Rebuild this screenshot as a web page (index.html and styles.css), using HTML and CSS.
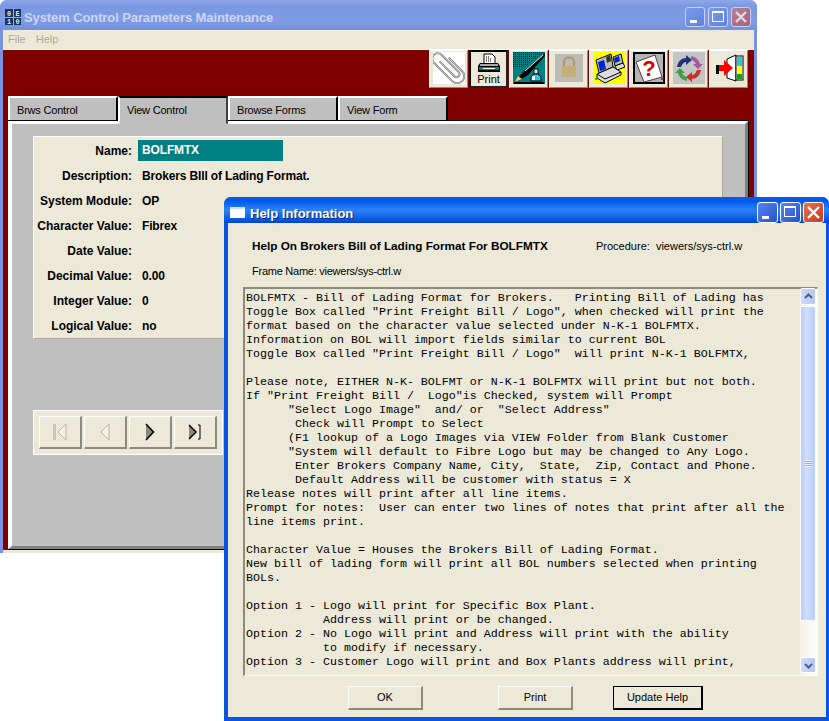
FILE: index.html
```html
<!DOCTYPE html>
<html lang="en">
<head>
    <meta charset="UTF-8">
    <title>System Control Parameters Maintenance</title>
    <link rel="stylesheet" href="styles.css">
</head>
<body>

<div class="window main-window">
    <div class="titlebar inactive">
        <svg class="app-icon" width="16" height="16" viewBox="0 0 16 16">
            <rect width="16" height="16" fill="#16325e"/>
            <rect x="8" width="1" height="16" fill="#9fb2d8"/>
            <rect y="8" width="16" height="1" fill="#9fb2d8"/>
            <g class="app-icon-text">
                <text x="4" y="6.5">0</text>
                <text x="12.5" y="6.5">E</text>
                <text x="4" y="15">1</text>
                <text x="12.5" y="15">0</text>
            </g>
        </svg>
        <span class="title-text">System Control Parameters Maintenance</span>
        <div class="caption-btns">
            <span class="cap cap-min"></span>
            <span class="cap cap-max"></span>
            <span class="cap cap-close">
                <svg width="20" height="20" viewBox="0 0 20 20"><path d="M5 5l10 10M15 5L5 15" stroke="#e8d8e0" stroke-width="2.4"/></svg>
            </span>
        </div>
    </div>
    <div class="menubar"><span>File</span><span>Help</span></div>
    <div class="work">
        <div class="toolbar">
            <div class="tool">
                <svg width="32" height="32" viewBox="0 0 32 32">
                    <rect width="32" height="32" fill="#fff"/>
                    <g transform="translate(15 15) rotate(-45)">
                        <path d="M-2-10V11a3 3 0 0 0 6 0V-13a5.500 5.500 0 0 0-11 0V13a7 7 0 0 0 14 0V-6" fill="none" stroke="#7c7c7c" stroke-width="2"/>
                        <path d="M-2-10V11a3 3 0 0 0 6 0V-13a5.500 5.500 0 0 0-11 0V13a7 7 0 0 0 14 0V-6" fill="none" stroke="#d4d4d4" stroke-width="0.8"/>
                    </g>
                </svg>
            </div>
            <div class="tool pressed">
                <svg width="24" height="21" viewBox="0 0 24 21">
                    <path d="M7 1h8l3 3v7H7z" fill="#fff" stroke="#000"/>
                    <path d="M9 4h1M11 4h1M9 6h1M11 6h1M13 6h1M9 8h1M11 8h1M13 8h1" stroke="#000"/>
                    <path d="M3 10h18l2 3v6H1v-6z" fill="#000"/>
                    <rect x="3" y="11" width="18" height="2" fill="#a8a8a8"/>
                    <rect x="2" y="14" width="20" height="3" fill="#008080"/>
                    <rect x="6" y="15" width="12" height="1" fill="#fff"/>
                </svg>
                <span>Print</span>
            </div>
            <div class="tool">
                <svg width="32" height="32" viewBox="0 0 32 32">
                    <defs><pattern id="dots" width="2" height="2" patternUnits="userSpaceOnUse"><rect width="1" height="1" fill="#062020"/></pattern></defs>
                    <rect width="32" height="32" fill="#008080"/>
                    <path d="M0 0h32L12 15H0z" fill="url(#dots)"/>
                    <path d="M32 1L11 19l-7 8-2 3 5-2 8-5L32 4z" fill="#000"/>
                    <path d="M30 3L12 19" stroke="#fff"/>
                    <path d="M2 30l3-6 4 3z" fill="#fc6"/>
                    <rect x="21" y="17" width="4" height="5" fill="#e8e8e8" stroke="#000"/>
                    <path d="M18 29v-4l3-3h4l3 3v4z" fill="#2ce" stroke="#000"/>
                    <rect x="19" y="24" width="3" height="4" fill="#fff"/>
                    <rect x="1" y="30" width="30" height="2" fill="#000"/>
                </svg>
            </div>
            <div class="tool">
                <svg width="32" height="32" viewBox="0 0 32 32">
                    <rect x="2" y="2" width="28" height="28" fill="#bcbbb6"/>
                    <path d="M11 14v-4c0-6 10-6 10 0v4" fill="none" stroke="#a99a70" stroke-width="2"/>
                    <rect x="9" y="14" width="14" height="11" fill="#c6ae78"/>
                </svg>
            </div>
            <div class="tool">
                <svg width="32" height="32" viewBox="0 0 32 32">
                    <rect width="32" height="32" fill="#ff0"/>
                    <path d="M20 5l8-3 2 9-8 3z" fill="#bbb" stroke="#000"/>
                    <path d="M21 6l5-2 1 5-5 2z" fill="#02c"/>
                    <path d="M22 14l8-3 2 4-8 3z" fill="#ddd" stroke="#000"/>
                    <path d="M3 8l15-6 2 13-14 6z" fill="#bbb" stroke="#000"/>
                    <path d="M5 10l6-2 2 9-6 2z" fill="#02c"/>
                    <path d="M13 5l4-2 1 6-4 2z" fill="#333"/>
                    <path d="M4 22l16-7 8 5v3l-16 8-8-5z" fill="#ddd" stroke="#000"/>
                    <path d="M4 22l8 5 16-7" fill="none" stroke="#000"/>
                    <rect x="2" y="26" width="2" height="2" fill="#0c0"/>
                </svg>
            </div>
            <div class="tool">
                <svg width="32" height="32" viewBox="0 0 32 32">
                    <rect x="1" y="1" width="30" height="30" fill="#b4b4b4" stroke="#000" stroke-width="2"/>
                    <path d="M3 10L22 3l7 22-18 5z" fill="#fff" stroke="#444"/>
                    <text class="help-mark" x="16" y="24">?</text>
                    <rect x="28" y="26" width="2" height="2" fill="#c0c"/>
                </svg>
            </div>
            <div class="tool">
                <svg width="32" height="32" viewBox="0 0 32 32">
                    <rect width="32" height="32" fill="#c4c4c4"/>
                    <path d="M4 15c1-6 5-9 9-9V3l6 5-6 5v-3c-2 0-4 2-5 5z" fill="#233078"/>
                    <path d="M18 4c5 1 8 4 9 8h3l-5 5-5-5h3c-1-2-3-4-5-4z" fill="#a35aa0"/>
                    <path d="M28 18c-1 6-5 9-9 9v3l-6-5 6-5v3c2 0 4-2 5-5z" fill="#c4342a"/>
                    <path d="M14 29c-5-1-8-4-9-8H2l5-5 5 5H9c1 2 3 4 5 4z" fill="#48984c"/>
                </svg>
            </div>
            <div class="tool">
                <svg width="32" height="32" viewBox="0 0 32 32">
                    <path d="M14 7l9-4v26l-9-3z" fill="#fff" stroke="#000"/>
                    <rect x="23" y="4" width="7" height="24" fill="#fff" stroke="#000"/>
                    <rect x="24" y="5" width="5" height="9" fill="#2cd"/>
                    <rect x="24" y="14" width="5" height="8" fill="#ff0"/>
                    <rect x="24" y="22" width="5" height="5" fill="#0a0"/>
                    <path d="M5 13h6V8l9 8-9 8v-5H5z" fill="#f00"/>
                    <path d="M3 13h3v9H3z" fill="#000"/>
                </svg>
            </div>
        </div>
        <div class="tabs">
            <div class="tab">Brws Control</div>
            <div class="tab active">View Control</div>
            <div class="tab">Browse Forms</div>
            <div class="tab">View Form</div>
        </div>
        <div class="tab-page">
            <div class="form-panel">
                <div class="row"><label>Name:</label><span class="name-value">BOLFMTX</span></div>
                <div class="row"><label>Description:</label><span>Brokers BIll of Lading Format.</span></div>
                <div class="row"><label>System Module:</label><span>OP</span></div>
                <div class="row"><label>Character Value:</label><span>Fibrex</span></div>
                <div class="row"><label>Date Value:</label><span></span></div>
                <div class="row"><label>Decimal Value:</label><span>0.00</span></div>
                <div class="row"><label>Integer Value:</label><span>0</span></div>
                <div class="row"><label>Logical Value:</label><span>no</span></div>
            </div>
            <div class="nav-panel">
                <div class="nav-btn"><svg width="14" height="18" viewBox="0 0 14 18"><path d="M1.500 1v16" stroke="#c8c6b8" stroke-width="3"/><path d="M13 1L5 9l8 8z" fill="#f6f4ea" stroke="#b4b2a4"/></svg></div>
                <div class="nav-btn"><svg width="10" height="18" viewBox="0 0 10 18"><path d="M9 1L1 9l8 8z" fill="#f6f4ea" stroke="#b4b2a4"/></svg></div>
                <div class="nav-btn"><svg width="10" height="18" viewBox="0 0 10 18"><path d="M1 1l8 8-8 8z" fill="#8c8a7c"/><path d="M1 1l7.500 8L1 17" fill="none" stroke="#000" stroke-width="1.500"/></svg></div>
                <div class="nav-btn"><svg width="14" height="16" viewBox="0 0 14 16"><path d="M1 1l7 7-7 7z" fill="#8c8a7c"/><path d="M1 1l7 7-7 7" fill="none" stroke="#000" stroke-width="1.500"/><path d="M10 1h2v14h-2" fill="none" stroke="#000"/></svg></div>
            </div>
        </div>
    </div>
    <div class="window-foot"></div>
</div>

<div class="window help-window">
    <div class="titlebar">
        <span class="help-icon"></span>
        <span class="title-text">Help Information</span>
        <div class="caption-btns">
            <span class="cap cap-min"></span>
            <span class="cap cap-max"></span>
            <span class="cap cap-close">
                <svg width="21" height="21" viewBox="0 0 21 21"><path d="M5 5l11 11M16 5L5 16" stroke="#fff" stroke-width="2.400"/></svg>
            </span>
        </div>
    </div>
    <div class="help-body">
        <div class="help-head">
            <b>Help On Brokers Bill of Lading Format For BOLFMTX</b>
            <span>Procedure:&nbsp; viewers/sys-ctrl.w</span>
        </div>
        <div class="frame-name">Frame Name: viewers/sys-ctrl.w</div>
        <div class="editor">
<pre class="help-text">BOLFMTX - Bill of Lading Format for Brokers.   Printing Bill of Lading has
Toggle Box called "Print Freight Bill / Logo", when checked will print the
format based on the character value selected under N-K-1 BOLFMTX.
Information on BOL will import fields similar to current BOL
Toggle Box called "Print Freight Bill / Logo"  will print N-K-1 BOLFMTX,

Please note, EITHER N-K- BOLFMT or N-K-1 BOLFMTX will print but not both.
If "Print Freight Bill /  Logo"is Checked, system will Prompt
      "Select Logo Image"  and/ or  "Select Address"
       Check will Prompt to Select
      (F1 lookup of a Logo Images via VIEW Folder from Blank Customer
      "System will default to Fibre Logo but may be changed to Any Logo.
       Enter Brokers Company Name, City,  State,  Zip, Contact and Phone.
       Default Address will be customer with status = X
Release notes will print after all line items.
Prompt for notes:  User can enter two lines of notes that print after all the
line items print.

Character Value = Houses the Brokers Bill of Lading Format.
New bill of lading form will print all BOL numbers selected when printing
BOLs.

Option 1 - Logo will print for Specific Box Plant.
           Address will print or be changed.
Option 2 - No Logo will print and Address will print with the ability
           to modify if necessary.
Option 3 - Customer Logo will print and Box Plants address will print,</pre>
            <div class="scrollbar">
                <div class="sb-btn sb-up"><svg width="9" height="7" viewBox="0 0 9 7"><path d="M1 5l3.500-3.500L8 5" fill="none" stroke="#4d6185" stroke-width="2"/></svg></div>
                <div class="sb-thumb"><span class="grip"></span></div>
                <div class="sb-track"></div>
                <div class="sb-btn sb-down"><svg width="9" height="7" viewBox="0 0 9 7"><path d="M1 2l3.500 3.500L8 2" fill="none" stroke="#4d6185" stroke-width="2"/></svg></div>
            </div>
        </div>
        <div class="help-buttons">
            <div class="btn btn-ok">OK</div>
            <div class="btn btn-print">Print</div>
            <div class="btn default">Update Help</div>
        </div>
    </div>
</div>

</body>
</html>
```

FILE: styles.css
```css
html, body {
    margin: 0;
    height: 721px;
    overflow: hidden;
    background: #fff;
}
body {
    position: relative;
    font-family: "Liberation Sans", Arial, sans-serif;
    font-size: 12px;
    color: #000;
}
.window {
    position: absolute;
    box-sizing: border-box;
    display: flex;
    flex-direction: column;
}

/* main window */
.main-window {
    left: 0;
    top: 0;
    width: 757px;
    height: 553px;
    background: #7b92e0;
    border-radius: 7px 7px 0 0;
    padding: 0 3px;
    overflow: hidden;
}
.titlebar {
    box-sizing: border-box;
    flex: none;
    display: flex;
    align-items: center;
    color: #fff;
}
.titlebar.inactive {
    height: 30px;
    margin: 0 -3px;
    padding: 7px 6px 3px 5px;
    background: linear-gradient(#8fa8e8, #7b98e2 20%, #7f9be4 70%, #7590dc);
    color: #ccd6f6;
}
.app-icon {
    margin-right: 3px;
    flex: none;
}
.app-icon-text text {
    font-family: "Liberation Mono", monospace;
    font-size: 7px;
    font-weight: bold;
    fill: #dfe8f8;
    text-anchor: middle;
}
.title-text {
    font-size: 13px;
    font-weight: bold;
    letter-spacing: -0.1px;
}
.caption-btns {
    margin-left: auto;
    display: flex;
    gap: 3px;
}
.cap {
    box-sizing: border-box;
    width: 20px;
    height: 20px;
    border: 1px solid #fff;
    border-radius: 3px;
    background: linear-gradient(135deg, #5a86ee, #2350d0);
    position: relative;
    display: block;
}
.cap svg {
    position: absolute;
    left: -1px;
    top: -1px;
}
.cap-min::after {
    content: "";
    position: absolute;
    left: 4px;
    bottom: 3px;
    width: 7px;
    height: 3px;
    background: #fff;
}
.cap-max::after {
    content: "";
    position: absolute;
    left: 3px;
    top: 3px;
    width: 10px;
    height: 8px;
    border: 1px solid #fff;
    border-top-width: 2px;
}
.cap-close {
    background: linear-gradient(135deg, #e8704a, #c83a1c);
}
.inactive .cap {
    background: linear-gradient(135deg, #7b9cec, #5f80dc);
    border-color: #c4d2f6;
}
.inactive .cap-close {
    background: linear-gradient(135deg, #b88094, #a0647c);
}
.menubar {
    box-sizing: border-box;
    height: 20px;
    flex: none;
    display: flex;
    align-items: center;
    gap: 10px;
    padding: 0 0 1px 5px;
    background: #ece9d8;
    color: #aca899;
    font-size: 11px;
    border-bottom: 1px solid #fff;
}
.work {
    flex: 1;
    background: #800000;
    display: flex;
    flex-direction: column;
    min-height: 0;
}
.window-foot {
    flex: none;
    height: 3px;
    background: #ece9d8;
}
.toolbar {
    display: flex;
    justify-content: flex-end;
    gap: 1px;
    padding-right: 6px;
    height: 37px;
    flex: none;
}
.tool {
    box-sizing: border-box;
    width: 39px;
    height: 38px;
    padding-top: 1px;
    background: #ece9d8;
    border: 1px solid;
    border-color: #fff #8c8a7c #8c8a7c #fff;
    display: flex;
    flex-direction: column;
    align-items: center;
    font-size: 11px;
    line-height: 11px;
}
.tool.pressed {
    padding-top: 1px;
    border: 2px solid #000;
    border-color: #000 #222 #222 #000;
}
.tabs {
    display: flex;
    align-items: flex-end;
    padding-left: 5px;
    margin-top: 8px;
    height: 26px;
    flex: none;
}
.tab {
    box-sizing: border-box;
    width: 110px;
    height: 25px;
    background: #bfbfbf;
    border-style: solid;
    border-color: #fff #000 #404040 #fff;
    border-width: 2px 2px 1px 2px;
    padding: 2px 0 0 7px;
    line-height: 20px;
    font-size: 11px;
    letter-spacing: -0.2px;
}
.tab.active {
    height: 28px;
    border-color: #000 #404040 #bfbfbf #fff;
    position: relative;
    z-index: 1;
    margin-bottom: -3px;
    padding-top: 2px;
}
.tab-page {
    flex: 1;
    box-sizing: border-box;
    margin: 0 6px 1px 5px;
    background: #bfbfbf;
    border-style: solid;
    border-width: 3px 3px 3px 4px;
    border-color: #fff #808080 #808080 #fff;
    box-shadow: 0 -1px 0 #000, 0 1px 0 #000, 1px 0 0 #000;
    padding: 12px 0 0 21px;
}
.form-panel {
    box-sizing: border-box;
    width: 690px;
    height: 203px;
    background: #ece9d8;
    border: 1px solid #fff;
    border-color: #fff #aca899 #aca899 #fff;
    padding-top: 1px;
}
.row {
    display: flex;
    align-items: center;
    height: 25px;
    font-weight: bold;
    font-size: 12px;
}
.row label {
    width: 98px;
    text-align: right;
    margin-right: 10px;
}
.row span {
    letter-spacing: -0.15px;
}
.name-value {
    background: #008080;
    color: #fff;
    width: 145px;
    height: 21px;
    line-height: 21px;
    margin-left: -4px;
    padding-left: 4px;
    box-sizing: border-box;
}
.nav-panel {
    margin-top: 71px;
    box-sizing: border-box;
    width: 190px;
    height: 45px;
    background: #ece9d8;
    border: 1px solid #fff;
    display: flex;
    gap: 2px;
    padding: 5px;
}
.nav-btn {
    box-sizing: border-box;
    width: 43px;
    height: 33px;
    background: #ece9d8;
    border-style: solid;
    border-color: #fff #8c8a7c #8c8a7c #fff;
    border-width: 1px 2px 2px 1px;
    display: flex;
    align-items: center;
    justify-content: center;
}

/* help window */
.help-window {
    left: 224px;
    top: 197px;
    width: 605px;
    height: 524px;
    background: #0a55e0;
    border-radius: 7px 7px 0 0;
    padding: 0 3px 4px 4px;
    overflow: hidden;
}
.help-window .titlebar {
    height: 26px;
    margin: 0 -3px 0 -4px;
    padding: 5px 5px 0 6px;
    background: linear-gradient(#0a5ae6, #0058ee 15%, #2f83f5 50%, #0a5ae0 85%, #0044c8);
}
.help-window .title-text {
    text-shadow: 1px 1px 0 #0a2a80;
    letter-spacing: 0;
    padding-top: 1px;
}
.help-window .caption-btns {
    gap: 2px;
}
.help-window .cap {
    width: 21px;
    height: 21px;
}
.help-icon {
    box-sizing: border-box;
    width: 15px;
    height: 11px;
    background: #fff;
    border-top: 2px solid #cfe0ff;
    margin: 0 5px 0 0;
}
.help-body {
    flex: 1;
    background: #ece9d8;
    display: flex;
    flex-direction: column;
    min-height: 0;
}
.help-head {
    display: flex;
    font-size: 11px;
    line-height: 14px;
    padding: 16px 0 0 24px;
}
.help-head b {
    width: 344px;
    flex: none;
    font-size: 11.75px;
}
.frame-name {
    font-size: 11px;
    line-height: 14px;
    letter-spacing: -0.25px;
    padding: 11px 0 0 24px;
}
.editor {
    box-sizing: border-box;
    margin: 9px 0 0 15px;
    height: 389px;
    width: 575px;
    background: #ece9d8;
    border-style: solid;
    border-width: 2px 1px 1px 2px;
    border-color: #8c8a7c #fff #fff #8c8a7c;
    display: flex;
}
.help-text {
    flex: 1;
    margin: 0;
    padding: 2px 0 0 1px;
    font-family: "Liberation Mono", "Courier New", monospace;
    font-size: 11.67px;
    line-height: 14px;
    overflow: hidden;
    white-space: pre;
}
.scrollbar {
    box-sizing: border-box;
    width: 17px;
    flex: none;
    display: flex;
    flex-direction: column;
    background: linear-gradient(90deg, #f3f1ec, #fdfdfa);
    padding: 0 1px 2px 0;
}
.sb-btn {
    height: 17px;
    flex: none;
    box-sizing: border-box;
    background: linear-gradient(90deg, #cfdcfb, #b4c8f6);
    border: 1px solid #fff;
    border-radius: 2px;
    display: flex;
    align-items: center;
    justify-content: center;
}
.sb-up {
    margin-top: -1px;
}
.sb-down {
    height: 16px;
}
.sb-thumb {
    height: 315px;
    flex: none;
    box-sizing: border-box;
    margin-top: 1px;
    background: linear-gradient(90deg, #b8ccf8, #d0dcfc 40%, #b8ccf8);
    border: 1px solid #fff;
    border-radius: 2px;
    display: flex;
    align-items: center;
    justify-content: center;
}
.grip {
    width: 7px;
    height: 7px;
    background: repeating-linear-gradient(#eef3ff 0 1px, #8fa9e8 1px 2px);
}
.sb-track {
    flex: 1;
}
.help-buttons {
    height: 41px;
    flex: none;
    display: flex;
    padding: 10px 0 0 120px;
    box-sizing: border-box;
}
.btn {
    box-sizing: border-box;
    width: 75px;
    height: 24px;
    background: #ece9d8;
    border-style: solid;
    border-width: 1px 2px 2px 1px;
    border-color: #fff #8c8a7c #8c8a7c #fff;
    text-align: center;
    line-height: 21px;
    font-size: 11px;
}
.btn-ok {
    margin-right: 75px;
}
.btn-print {
    margin-right: 40px;
}
.btn.default {
    width: 90px;
    border-color: #000;
}
.help-mark {
    font-family: "Liberation Sans", Arial, sans-serif;
    font-size: 22px;
    font-weight: bold;
    fill: #e00000;
    text-anchor: middle;
}
```
